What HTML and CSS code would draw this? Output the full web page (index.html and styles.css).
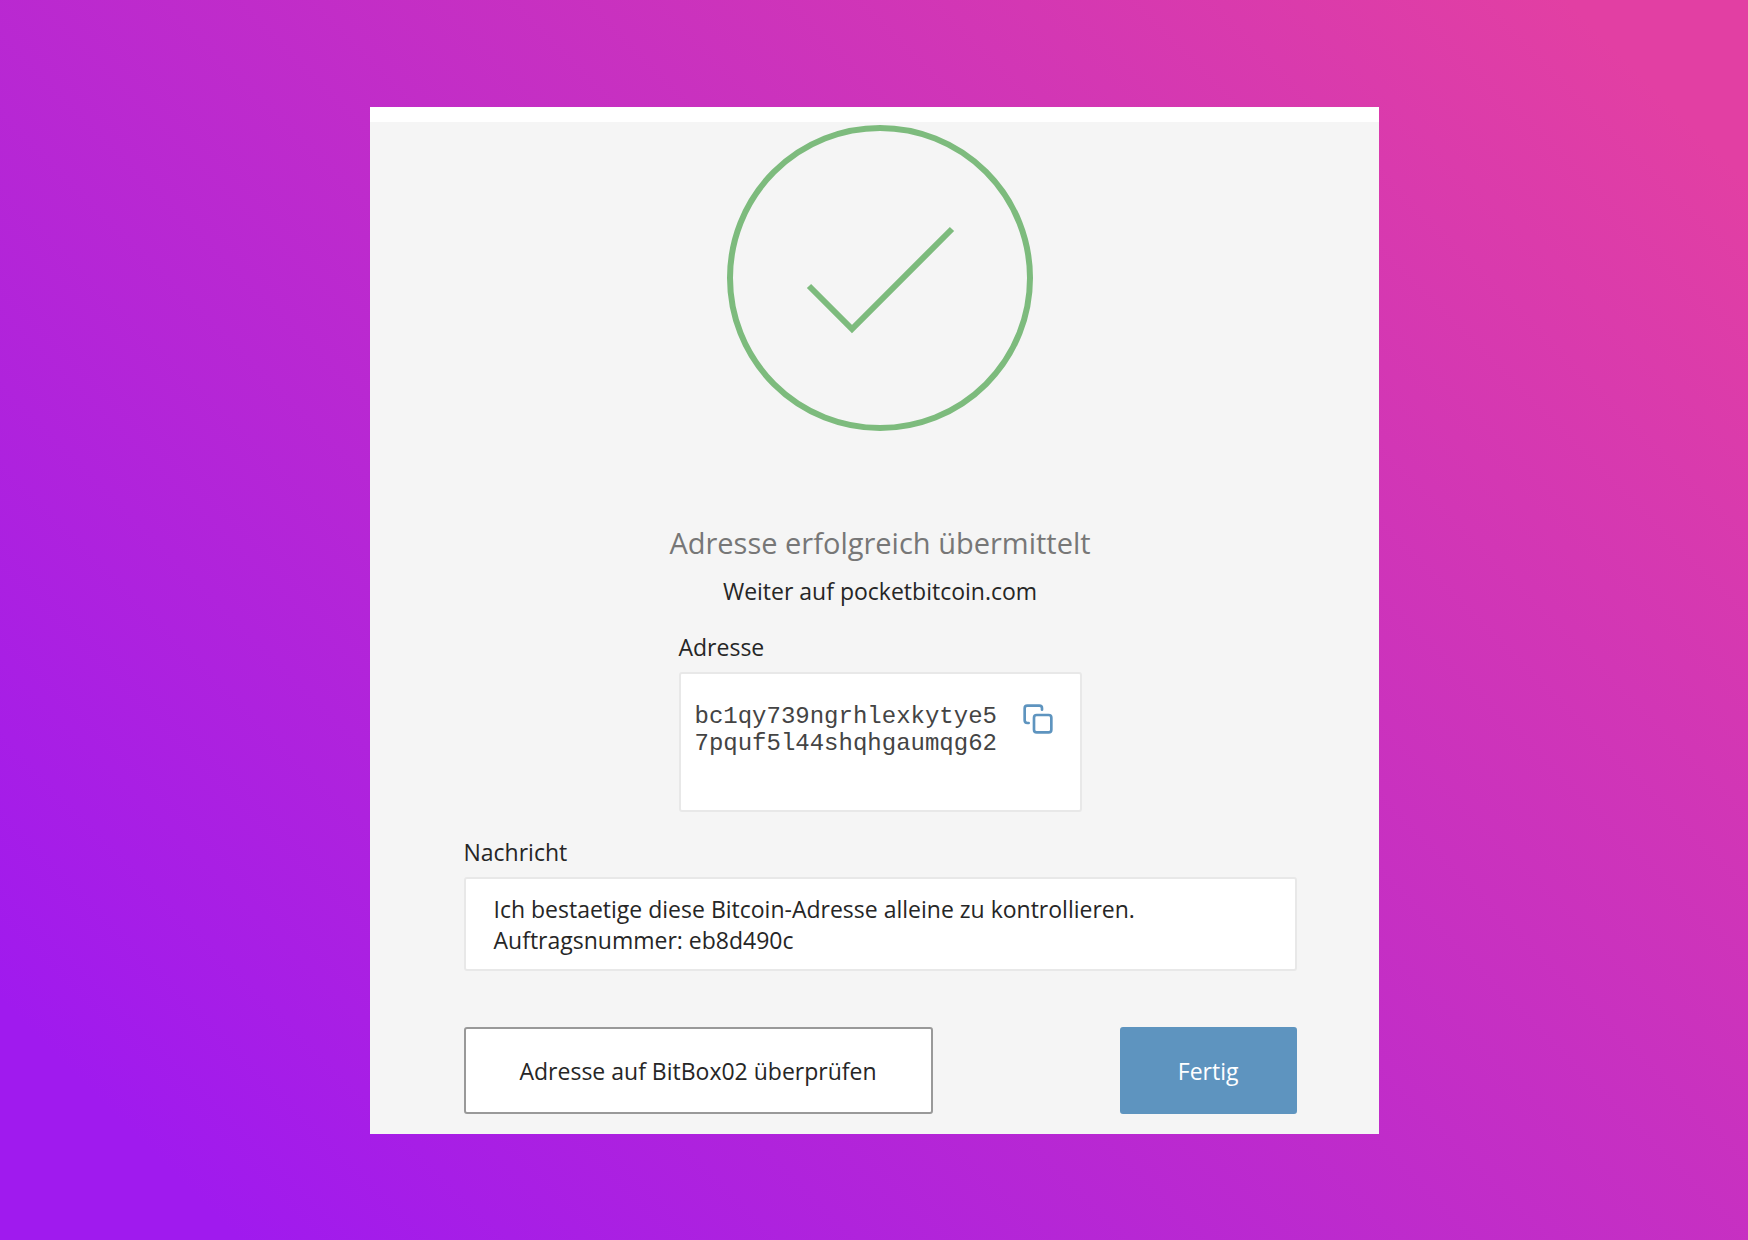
FILE: index.html
```
<!DOCTYPE html>
<html lang="de">
<head>
    <meta charset="UTF-8">
    <meta name="viewport" content="width=device-width, initial-scale=1.0">
    <title>Adresse erfolgreich übermittelt</title>
    <link rel="stylesheet" href="styles.css">
</head>
<body>
    <main class="card">
        <svg class="success-icon" viewBox="0 0 306 306" fill="none" stroke="#7dbb7d" stroke-width="6" aria-hidden="true">
            <circle cx="153" cy="153" r="150"/>
            <path d="M82 161L125 204L225 104"/>
        </svg>

        <h1 class="title">Adresse erfolgreich übermittelt</h1>
        <p class="subtitle">Weiter auf pocketbitcoin.com</p>

        <div class="field field-address">
            <label for="address">Adresse</label>
            <div class="address-box">
                <textarea id="address" rows="2" spellcheck="false" readonly>bc1qy739ngrhlexkytye57pquf5l44shqhgaumqg62</textarea>
                <button class="copy" type="button" aria-label="Adresse kopieren">
                    <svg viewBox="0 0 24 24" fill="none" stroke="currentColor" stroke-width="2" stroke-linecap="round" stroke-linejoin="round">
                        <rect x="9" y="9" width="13" height="13" rx="2" ry="2"/>
                        <path d="M5 15H4a2 2 0 0 1-2-2V4a2 2 0 0 1 2-2h9a2 2 0 0 1 2 2v1"/>
                    </svg>
                </button>
            </div>
        </div>

        <div class="field">
            <label for="message">Nachricht</label>
            <textarea id="message" class="message" rows="2" spellcheck="false" readonly>Ich bestaetige diese Bitcoin-Adresse alleine zu kontrollieren.
Auftragsnummer: eb8d490c</textarea>
        </div>

        <div class="buttons">
            <button class="btn btn-secondary" type="button">Adresse auf BitBox02 überprüfen</button>
            <button class="btn btn-primary" type="button">Fertig</button>
        </div>
    </main>
</body>
</html>
```
FILE: styles.css
```
* {
    box-sizing: border-box;
}

body {
    margin: 0;
    min-height: 100vh;
    display: flex;
    align-items: center;
    justify-content: center;
    background: linear-gradient(45deg, #a01aee 8%, #e23fa3 94%);
    color: #262626;
    font-family: "Segoe UI", "Open Sans", sans-serif;
    font-size: 23px;
    line-height: 31px;
}

.card {
    width: 100%;
    max-width: 1009px;
    display: flex;
    flex-direction: column;
    padding: 3px 82px 20px 94px;
    background: #f5f5f5;
    border-top: 15px solid #fff;
}

.success-icon {
    width: 306px;
    height: 306px;
    align-self: center;
}

.title {
    margin: 88px 0 0;
    font-size: 29px;
    font-weight: 400;
    line-height: 48px;
    text-align: center;
    color: #777;
}

.subtitle {
    margin: 9px 0 0;
    text-align: center;
}

.field {
    display: flex;
    flex-direction: column;
    gap: 9px;
    margin-top: 25px;
}

.field-address {
    width: 100%;
    max-width: 403px;
    align-self: center;
}

textarea {
    display: block;
    margin: 0;
    border: 0;
    resize: none;
    overflow: hidden;
    outline: none;
    color: inherit;
    background: transparent;
    font: inherit;
}

.address-box,
.message {
    background: #fff;
    border: 2px solid #e8e8e8;
    border-radius: 3px;
}

.address-box {
    display: flex;
    align-items: flex-start;
    gap: 18px;
    height: 140px;
    padding: 29px 26px 28px 14px;
}

.address-box textarea {
    flex: 1;
    min-width: 0;
    padding: 0;
    color: #444;
    font-family: "Liberation Mono", "Courier New", monospace;
    font-size: 24px;
    line-height: 27px;
    word-break: break-all;
}

.message {
    padding: 15px 28px 13px;
}

.copy {
    display: flex;
    padding: 0;
    border: 0;
    background: none;
    color: #5e94bf;
    cursor: pointer;
}

.copy svg {
    width: 32px;
    height: 32px;
}

.buttons {
    display: flex;
    justify-content: space-between;
    margin-top: 56px;
}

.btn {
    height: 87px;
    padding: 2px 56px 0;
    border: 2px solid #5e94bf;
    border-radius: 3px;
    font: inherit;
    cursor: pointer;
}

.btn-secondary {
    padding: 2px 54px 0;
    background: #fff;
    border-color: #999;
    color: inherit;
}

.btn-primary {
    background: #5e94bf;
    color: #fff;
}
```
